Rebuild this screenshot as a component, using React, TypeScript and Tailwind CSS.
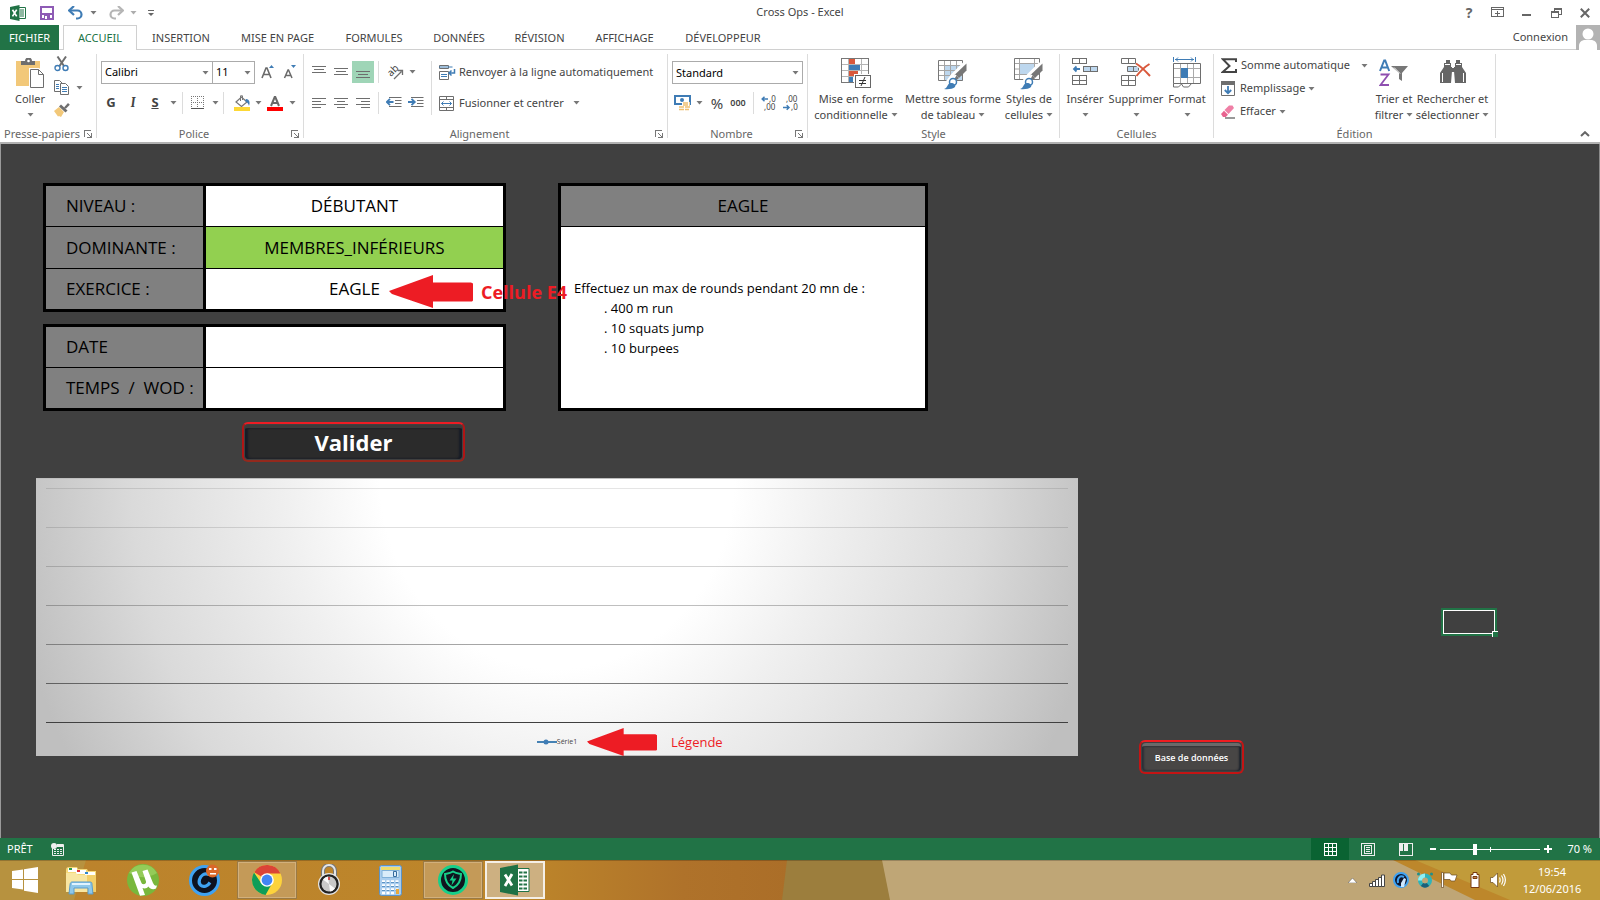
import { useState } from "react";
import type { ReactNode } from "react";

interface IconProps {
    w: number;
    h: number;
    crisp?: boolean;
    className?: string;
    children: ReactNode;
}
interface TaskItem {
    name: string;
    icon: ReactNode;
    state?: "open" | "active";
}

const Icon = ({ w, h, crisp, className, children }: IconProps) => (
    <svg width={w} height={h} viewBox={`0 0 ${w} ${h}`} fill="none" shapeRendering={crisp ? "crispEdges" : undefined} className={className ?? "shrink-0"} aria-hidden="true">
        {children}
    </svg>
)
const Caret = ({ className }: { className?: string }) => (
    <Icon w={7} h={4} className={className ?? "shrink-0 inline-block"}><path d="M0.5 0h6L3.5 3.5z" fill="#777" /></Icon>
)

// quick access toolbar
const ExcelSmall = () => (
    <Icon w={16} h={16}>
        <path d="M9 2.5h6.5v11H9" fill="#fff" stroke="#217346" />
        <path d="M10 5h4M10 7h4M10 9h4M10 11h4" stroke="#217346" strokeWidth="1" />
        <path d="M0 2l9.5-2v16L0 14z" fill="#217346" />
        <path d="M2.5 4.8l4.2 6.6M6.7 4.6l-4.2 6.8" stroke="#fff" strokeWidth="1.7" />
    </Icon>
)
const Save = () => (
    <Icon w={14} h={14} crisp>
        <path d="M1 1h12v12H1z" stroke="#8e5bb5" strokeWidth="2" />
        <path d="M2 7h10v2H2zM4 9h6v4H4z" fill="#8e5bb5" />
        <path d="M5 10h2v3H5z" fill="#fff" />
    </Icon>
)
const Undo = ({ color, flip }: { color: string; flip?: boolean }) => (
    <Icon w={15} h={14} className={flip ? "shrink-0 -scale-x-100" : "shrink-0"}>
        <path d="M2 4.5h7.5a4 4 0 0 1 0 8H8" stroke={color} strokeWidth="2.2" />
        <path d="M6 0L1.2 4.5 6 9" stroke={color} strokeWidth="2.2" />
    </Icon>
)

// clipboard group
const Paste = () => (
    <Icon w={28} h={32}>
        <path d="M0 3h24v25H0z" fill="#f2c879" />
        <path d="M5 7V3h4a3.5 3.5 0 0 1 7 0h3v4z" fill="#6e6e6e" />
        <circle cx="12.5" cy="3" r="1.3" fill="#fff" />
        <path d="M14.500 11.500h8l5 5v13h-13z" fill="#fff" stroke="#fff" strokeWidth="3" />
        <path d="M14.500 11.500h8l5 5v13h-13z" fill="#fff" stroke="#6e6e6e" />
        <path d="M22.500 11.500v5h5" stroke="#6e6e6e" />
    </Icon>
)
const Cut = () => (
    <Icon w={16} h={16}>
        <path d="M3.500 0.500l6.500 9.500M12 0.500L5.500 10" stroke="#6e6e6e" strokeWidth="2" />
        <circle cx="3.500" cy="12" r="2.500" stroke="#3f7cb5" strokeWidth="1.400" />
        <circle cx="11.500" cy="12" r="2.500" stroke="#3f7cb5" strokeWidth="1.400" />
    </Icon>
)
const Copy = () => (
    <Icon w={16} h={15}>
        <path d="M0.500 0.500h5l3 3v8h-8z" fill="#fff" stroke="#6e6e6e" />
        <path d="M2 4.500h3M2 6.500h3M2 8.500h3" stroke="#3f7cb5" />
        <path d="M6.500 3.500h5l3 3v8h-8z" fill="#fff" stroke="#6e6e6e" />
        <path d="M8 7.500h5M8 9.500h5M8 11.500h5" stroke="#3f7cb5" />
    </Icon>
)
const Brush = () => (
    <Icon w={16} h={14}>
        <path d="M0 8l5-4 5 5-3 5-2-1-1 .5z" fill="#f2c879" />
        <path d="M5 3.500l2-2 6.500 6-2 2z" fill="#6e6e6e" />
        <path d="M10 4.500l4-4.500 1.800 1.800-4 4z" fill="#6e6e6e" />
    </Icon>
)
const GrowFont = () => (
    <Icon w={14} h={14}>
        <path d="M1 13L5 3h1l4 10M2.500 9.500h6" stroke="#6a6a6a" strokeWidth="1.600" />
        <path d="M8 3h5l-2.500-3z" fill="#3f7cb5" />
    </Icon>
)
const ShrinkFont = () => (
    <Icon w={14} h={14}>
        <path d="M1.500 13L5 5h.5L9 13M3 10.500h5" stroke="#6a6a6a" strokeWidth="1.500" />
        <path d="M8 0h5l-2.500 3z" fill="#3f7cb5" />
    </Icon>
)
const Borders = () => (
    <Icon w={14} h={14} crisp>
        <path d="M0 .5h13M0 6.500h13M.5 0v13M6.500 0v13M12.500 0v13" stroke="#777" strokeDasharray="1 1" />
        <path d="M0 12.500h13" stroke="#555" />
    </Icon>
)
const Bucket = () => (
    <Icon w={17} h={16}>
        <path d="M2 7l5.500-5 5.500 5-5.500 4.500z" fill="#fff" stroke="#777" strokeWidth="1.200" />
        <path d="M6.500 6V0.800h2V5" stroke="#777" />
        <path d="M12 4c3 0 4.500 3 3 7-.5-2-1.500-4-4-5z" fill="#3f7cb5" />
        <path d="M0 12h16v4H0z" fill="#fdd835" />
    </Icon>
)
const FontColor = () => (
    <Icon w={16} h={16}>
        <path d="M4 11L7.700 2h.6L12 11M5.500 8h5.500" stroke="#6a6a6a" strokeWidth="2" />
        <path d="M0 12h16v4H0z" fill="#f00" />
    </Icon>
)

// horizontal strokes given as [x, y, width]
const Lines = ({ rows, w = 14, h = 12 }: { rows: number[][]; w?: number; h?: number }) => (
    <Icon w={w} h={h} crisp>
        {rows.map(([x, y, len]) => <path key={y} d={`M${x} ${y}h${len}v1h-${len}z`} fill="#6e6e6e" />)}
    </Icon>
)
const Orientation = () => (
    <Icon w={20} h={20}>
        <text x="7" y="15" transform="rotate(-45 7 15)" fontSize="10" fill="#444" fontFamily="Noto Sans, sans-serif">ab</text>
        <path d="M10 17L17.500 9.500M14 8.500h4.500V13" stroke="#6e6e6e" strokeWidth="1.300" />
    </Icon>
)
const Indent = ({ right }: { right?: boolean }) => (
    <Icon w={16} h={12}>
        <path d="M3 .5h12.500M9 3.500h6.500M9 6.500h6.500M3 9.500h12.500" stroke="#6e6e6e" />
        {right
            ? <path d="M0 5h6M3.500 1.800L6.800 5 3.500 8.200" stroke="#3f7cb5" strokeWidth="1.800" />
            : <path d="M1 5h6.500M4 1.800L.8 5 4 8.200" stroke="#3f7cb5" strokeWidth="1.800" />}
    </Icon>
)
const WrapText = () => (
    <Icon w={17} h={15}>
        <path d="M.5 .5h9v3h-9z" stroke="#6e6e6e" />
        <path d="M.5 6.500h9v8h-9z" stroke="#6e6e6e" />
        <path d="M2 9.500h6M2 11.500h6M0 2h13.500" stroke="#3f7cb5" />
        <path d="M15.500 4v4h-5M12.500 5.500L10 8l2.500 2.500" stroke="#3f7cb5" strokeWidth="1.500" />
    </Icon>
)
const Merge = () => (
    <Icon w={15} h={15}>
        <path d="M.5 .5h14v14H.5zM.5 3.500h14M.5 11.500h14M7.500 .5v3M7.500 11.500v3" stroke="#6e6e6e" />
        <path d="M2.500 7.500h10M4.500 5.500l-2 2 2 2M10.500 5.500l2 2-2 2" stroke="#3f7cb5" />
    </Icon>
)
const Currency = () => (
    <Icon w={17} h={16}>
        <path d="M1 1h15v8H1z" fill="#fff" stroke="#3f7cb5" strokeWidth="2" />
        <circle cx="8" cy="5" r="2" fill="#3f7cb5" />
        <path d="M8 7h8v9H8z" fill="#fff" />
        <path d="M9 8h7M9 10h7M5 12h11M5 14.500h10" stroke="#f0c070" strokeWidth="1.600" strokeDasharray="5 1" />
    </Icon>
)
const Decimals = ({ add }: { add?: boolean }) => (
    <Icon w={18} h={22}>
        <g fontSize="8" fill="#444" fontFamily="Noto Sans, sans-serif">
            <text x={add ? 8 : 3} y="10">{add ? ",0" : ",00"}</text>
            <text x={add ? 3 : 8} y="18">{add ? ",00" : ",0"}</text>
        </g>
        {add
            ? <path d="M1 7h6M3.500 4.800L1.200 7l2.300 2.200" stroke="#3f7cb5" strokeWidth="1.500" />
            : <path d="M0 15.500h6M3.700 13.200L6 15.500l-2.300 2.200" stroke="#3f7cb5" strokeWidth="1.500" />}
    </Icon>
)

// style group
const Conditional = () => (
    <Icon w={30} h={32} crisp>
        <path d="M.5 .5h27v24H.5z" fill="#fff" />
        <path d="M8 1h6v5H8zM8 13h9v5H8z" fill="#d9583b" />
        <path d="M8 7h11v5H8zM8 19h4v5H8z" fill="#3f7cb5" />
        <path d="M7.500 0v24M20.500 0v24M0 6.500h27M0 12.500h27M0 18.500h27" stroke="#b5b5b5" />
        <path d="M.5 .5h27v24H.5z" stroke="#777" />
        <path d="M13 16h17v15H13z" fill="#fff" />
        <path d="M14.500 17.500h15v12h-15z" fill="#fff" stroke="#666" />
        <path d="M18 22h7v1h-7zM18 25h7v1h-7z" fill="#333" />
        <path d="M24 19l-4 9" stroke="#333" shapeRendering="auto" />
    </Icon>
)
const PaintBrush = () => (
    <>
        <path d="M28.500 5.500v7l-8 8-4-3.500z" fill="#777" />
        <path d="M17 17l3.500 3.500" stroke="#fff" strokeWidth="1.500" />
        <path d="M18.500 17.500l2.500 2.500-3 2.500-1.500-1.500z" fill="#777" />
        <circle cx="15" cy="24" r="3.500" fill="#fff" stroke="#3f7cb5" strokeWidth="1.500" />
        <path d="M6 31c4-1 3-6 7-6 3 0 5 2 4 4-2 2-7 2.500-11 2z" fill="#3f7cb5" />
    </>
)
const TableFormat = () => (
    <Icon w={30} h={32}>
        <path d="M.5 2.500h24v20H.5z" fill="#fff" />
        <path d="M7 7h18v16H7z" fill="#bdd7ee" />
        <path d="M6.500 2v20M12.500 2v20M18.500 2v20M0 7.500h25M0 12.500h25M0 17.500h25" stroke="#a5a5a5" />
        <path d="M.5 2.500h24v20H.5z" stroke="#777" />
        <path d="M27 6L15 18l-6 8" stroke="#fff" strokeWidth="5" />
        <PaintBrush />
    </Icon>
)
const CellStyles = () => (
    <Icon w={30} h={32}>
        <path d="M.5 .5h25v21H.5z" fill="#fff" />
        <path d="M6 6h14v10H6z" fill="#bdd7ee" />
        <path d="M5.500 0v21M20.500 0v21M0 5.500h25M0 16.500h25M0 11h5M20 11h5" stroke="#a5a5a5" />
        <path d="M.5 .5h25v21H.5z" stroke="#777" />
        <path d="M27 6L15 18l-6 8" stroke="#fff" strokeWidth="5" />
        <PaintBrush />
    </Icon>
)

// cells group
const InsertCells = () => (
    <Icon w={26} h={32} crisp>
        <path d="M.5 .5h14v5H.5zM7.500 .5v5M.5 17.500h14v9H.5zM7.500 17.500v9M.5 22.500h14" stroke="#6e6e6e" />
        <path d="M11.500 8.500h14v5h-14zM18.500 8.500v5" fill="#bdd7ee" stroke="#6e6e6e" />
        <path d="M2 11h6M4.500 8.500L2 11l2.500 2.500" stroke="#3f7cb5" strokeWidth="1.800" shapeRendering="auto" />
    </Icon>
)
const DeleteCells = () => (
    <Icon w={30} h={32}>
        <path d="M.5 .5h14v5H.5zM7.500 .5v5M.5 17.500h14v10H.5zM7.500 17.500v10M.5 22.500h14" stroke="#6e6e6e" />
        <path d="M6.500 8.500h11v5h-11z" fill="#bdd7ee" stroke="#6e6e6e" />
        <path d="M12.500 8.500v5" stroke="#6e6e6e" />
        <path d="M15 5.500c5 3 9 7 14 12.500M28.500 6c-5 3-9 7-13 12" stroke="#fff" strokeWidth="4" />
        <path d="M15 5.500c5 3 9 7 14 12.500M28.500 6c-5 3-9 7-13 12" stroke="#d9583b" strokeWidth="2" />
    </Icon>
)
const FormatCells = () => (
    <Icon w={28} h={32} className="shrink-0 -mt-px">
        <path d="M.5 0v5M22.500 0v5M2 2.500h19M5 .5L3 2.500l2 2M18 .5l2 2-2 2" stroke="#3f7cb5" />
        <path d="M.5 6.500h27v20H.5z" fill="#fff" />
        <path d="M7.500 6v20M14.500 6v20M20.500 6v20M0 11.500h27M0 20.500h27" stroke="#aaa" />
        <path d="M.5 6.500h27v20H.5z" stroke="#6e6e6e" />
        <path d="M8 11h7v10H8z" fill="#3f7cb5" />
        <path d="M.5 26.500v3.500h5l3-3 2 3h5l3-3.500" stroke="#6e6e6e" />
    </Icon>
)

// editing group
const Sigma = () => (
    <Icon w={16} h={16}><path d="M15 4V1.200H1.800L8.500 8l-6.700 6H15v-3" stroke="#444" strokeWidth="2" /></Icon>
)
const Fill = () => (
    <Icon w={14} h={15}>
        <path d="M.5 .5h13v14H.5z" fill="#fff" stroke="#6e6e6e" />
        <path d="M0 0h14v4H0z" fill="#6e6e6e" />
        <path d="M7 5v7M3.800 9L7 12.200 10.200 9" stroke="#3f7cb5" strokeWidth="1.800" />
    </Icon>
)
const Eraser = () => (
    <Icon w={14} h={14}>
        <path d="M3.500 5L8 .5h3.500L13 3 7.500 9z" fill="#ef7fa5" />
        <path d="M3 5.700L7 9.800 4.800 12H2L0 9z" fill="#e8638f" />
        <path d="M4 13h10" stroke="#777" strokeWidth="1.500" />
    </Icon>
)
const SortFilter = () => (
    <Icon w={30} h={32}>
        <path d="M1 13L5.200 2.500h1L10.200 13M2.500 9.500h6" stroke="#3f7cb5" strokeWidth="2" />
        <path d="M1.500 16.500h8l-8 10.500h8.500" stroke="#8e4fb0" strokeWidth="1.800" />
        <path d="M12 8h17l-6 7v8l-3-2v-6z" fill="#777" />
        <path d="M15 9.500l6 6" stroke="#fff" />
    </Icon>
)
const Binoculars = () => (
    <Icon w={26} h={32}>
        <path d="M6 2h4v3h1v4h1v4l-1 12H0V15l4-6V5h2zM20 2h-4v3h-1v4h-1v4l1 12h11V15l-4-6V5h-2z" fill="#666" />
        <path d="M10 10h6v4h-6z" fill="#666" />
        <path d="M2.500 15v9M23.500 15v9M5 6.500h5M16 6.500h5" stroke="#fff" />
    </Icon>
)

const ToolButton = ({ label, className, children }: { label: string; className: string; children: ReactNode }) => (
    <button aria-label={label} className={`flex h-full shrink-0 items-center justify-center ${className}`}>{children}</button>
)
const Sep = ({ className }: { className?: string }) => <div className={`w-px shrink-0 bg-[#dcdcdc] ${className ?? "h-full"}`} />

const BigButton = ({ icon, lines, className }: { icon: ReactNode; lines: string[]; className: string }) => (
    <button className={`flex shrink-0 flex-col items-center pt-1 leading-4 whitespace-nowrap ${className}`}>
        <span className="mb-px flex h-8 items-start">{icon}</span>
        <span>{lines[0]}</span>
        <span className="flex h-4 items-center gap-[3px]">{lines[1]}<Caret /></span>
    </button>
)
const Group = ({ title, launcher, className, children }: { title: string; launcher?: boolean; className: string; children: ReactNode }) => (
    <section className={`flex h-[84px] shrink-0 flex-col border-r border-[#dcdcdc] ${className}`}>
        <div className="h-[74px]">{children}</div>
        <div className="flex h-[10px] items-center leading-3 text-[#666]">
            <span className="flex-1 pt-0.5 text-center whitespace-nowrap">{title}</span>
            {launcher && (
                <button aria-label={`Options ${title}`} className="mt-px mr-1">
                    <Icon w={8} h={8} crisp><path d="M.5 7V.5H7" stroke="#777" /><path d="M3 3l4 4M7.500 3v5M3 7.500h5" stroke="#777" /></Icon>
                </button>
            )}
        </div>
    </section>
)

const tabs: [string, string][] = [
    ["INSERTION", "w-[88px]"],
    ["MISE EN PAGE", "w-[105px]"],
    ["FORMULES", "w-[88px]"],
    ["DONNÉES", "w-[82px]"],
    ["RÉVISION", "w-[79px]"],
    ["AFFICHAGE", "w-[91px]"],
    ["DÉVELOPPEUR", "w-[106px]"],
]

const TitleBar = () => (
    <header className="grid h-[25px] grid-cols-[1fr_auto_1fr] items-center bg-white">
        <div className="flex h-full items-center pl-[10px]">
            <ExcelSmall />
            <button aria-label="Enregistrer" className="ml-[14px]"><Save /></button>
            <button aria-label="Annuler" className="ml-[14px] flex items-center gap-[7px]"><Undo color="#3f7cb5" /><Caret /></button>
            <button aria-label="Rétablir" className="ml-[12px] flex items-center gap-[6px]"><Undo color="#b5b5b5" flip /><Caret className="opacity-60" /></button>
            <button aria-label="Personnaliser" className="ml-[11px]"><Icon w={6} h={6}><path d="M0 .5h6" stroke="#666" /><path d="M0 3h6L3 6z" fill="#666" /></Icon></button>
        </div>
        <h1 className="text-[11px]">Cross Ops - Excel</h1>
        <div className="flex items-center justify-end pr-[10px] text-[#666]">
            <button aria-label="Aide" className="w-[14px] text-sm leading-none font-bold">?</button>
            <button aria-label="Affichage du ruban" className="ml-[15px]"><Icon w={14} h={11} crisp><path d="M.5 .5h12v9H.5zM.5 2.500h12" stroke="#666" /><path d="M6.500 4v5M4 6.500h5" stroke="#666" /></Icon></button>
            <button aria-label="Réduire" className="ml-[17px]"><Icon w={10} h={10} crisp><path d="M0 6h9v2H0z" fill="#666" /></Icon></button>
            <button aria-label="Restaurer" className="ml-[19px]"><Icon w={11} h={10} crisp><path d="M3.500 3V.5h7v6H8M3 1.500h7" stroke="#666" /><path d="M.5 3.500h7v6h-7zM0 4.500h7" stroke="#666" /></Icon></button>
            <button aria-label="Fermer" className="ml-[18px]"><Icon w={10} h={10}><path d="M.8 .8l8.400 8.400M9.200 .8L.8 9.200" stroke="#666" strokeWidth="2" /></Icon></button>
        </div>
    </header>
)

const TabRow = () => (
    <nav className="flex h-[25px] bg-white text-[11px] whitespace-nowrap">
        <button className="w-[59px] shrink-0 bg-[#217346] pt-px text-white">FICHIER</button>
        <div className="w-1 shrink-0 border-b border-[#d0d0d0]" />
        <button className="w-[74px] shrink-0 border border-b-0 border-[#d0d0d0] text-[#217346]">ACCUEIL</button>
        {tabs.map(([name, width]) => (
            <button key={name} className={`shrink-0 border-b border-[#d0d0d0] pt-0.5 ${width}`}>{name}</button>
        ))}
        <div className="flex flex-1 items-center justify-end border-b border-[#d0d0d0]">
            <button className="mr-2">Connexion</button>
        </div>
        <div className="bg-[#b3b3b3]">
            <Icon w={24} h={25}>
                <circle cx="12" cy="9" r="5.500" fill="#fff" />
                <path d="M3 25v-4c0-4 3-6 6-6h6c3 0 6 2 6 6v4z" fill="#fff" />
            </Icon>
        </div>
    </nav>
)

const selectClass = "h-[23px] appearance-none border border-[#ababab] bg-white pt-px pl-[3px] text-[11px] text-black outline-none"
const Combo = ({ label, options, className }: { label: string; options: string[]; className: string }) => (
    <div className={`relative h-[23px] shrink-0 ${className}`}>
        <select aria-label={label} className={`w-full ${selectClass}`}>
            {options.map(o => <option key={o}>{o}</option>)}
        </select>
        <Caret className="pointer-events-none absolute top-[10px] right-1" />
    </div>
)

const Ribbon = () => (
    <div className="flex border-b-2 border-[#b2b2b2] bg-white py-1 text-[11px]">
        <Group title="Presse-papiers" launcher className="w-[97px]">
            <div className="flex">
                <BigButton icon={<Paste />} lines={["Coller", ""]} className="w-11 ml-2" />
                <div className="ml-[2px] flex flex-col items-start gap-2 pt-[2px]">
                    <button aria-label="Couper"><Cut /></button>
                    <button aria-label="Copier" className="flex items-center gap-[6px]"><Copy /><Caret /></button>
                    <button aria-label="Reproduire la mise en forme"><Brush /></button>
                </div>
            </div>
        </Group>
        <Group title="Police" launcher className="w-[207px]">
            <div className="flex flex-col gap-[9px] pt-[7px]">
                <div className="flex h-[22px] items-center pl-1">
                    <Combo label="Police" options={["Calibri", "Arial"]} className="w-[112px]" />
                    <Combo label="Taille" options={["11", "12", "14"]} className="w-[43px] -ml-px" />
                    <ToolButton label="Agrandir" className="ml-[2px] w-[22px]"><GrowFont /></ToolButton>
                    <ToolButton label="Réduire" className="w-[22px]"><ShrinkFont /></ToolButton>
                </div>
                <div className="flex h-[22px] items-center pl-[3px] text-[13px] font-bold">
                    <ToolButton label="Gras" className="w-[22px]">G</ToolButton>
                    <ToolButton label="Italique" className="w-[22px] font-serif italic">I</ToolButton>
                    <ToolButton label="Souligné" className="w-[22px] underline">S</ToolButton>
                    <ToolButton label="Options" className="w-[14px]"><Caret /></ToolButton>
                    <Sep className="ml-[2px] h-[22px]" />
                    <ToolButton label="Bordures" className="ml-[4px] w-[22px]"><Borders /></ToolButton>
                    <ToolButton label="Options" className="w-[12px]"><Caret /></ToolButton>
                    <Sep className="ml-[2px] h-[22px]" />
                    <ToolButton label="Remplissage" className="ml-[7px] w-[22px]"><Bucket /></ToolButton>
                    <ToolButton label="Options" className="w-[10px]"><Caret /></ToolButton>
                    <ToolButton label="Couleur" className="w-[24px]"><FontColor /></ToolButton>
                    <ToolButton label="Options" className="w-[10px]"><Caret /></ToolButton>
                </div>
            </div>
        </Group>
        <Group title="Alignement" launcher className="w-[364px]">
            <div className="flex h-full pt-[7px]">
                <div className="flex flex-col gap-[9px] pl-1">
                    <div className="flex h-[22px] items-center">
                        <ToolButton label="Haut" className="w-[22px]"><Lines rows={[[0, 0, 14], [2, 3, 10], [0, 6, 14]]} /></ToolButton>
                        <ToolButton label="Milieu" className="w-[22px]"><Lines rows={[[0, 2, 14], [2, 5, 10], [0, 8, 14]]} /></ToolButton>
                        <ToolButton label="Bas" className="w-[22px] bg-[#9fd5b7]"><Lines rows={[[0, 5, 14], [2, 8, 10], [0, 11, 14]]} /></ToolButton>
                        <Sep className="ml-1 h-[22px]" />
                        <ToolButton label="Orientation" className="ml-1 w-[22px]"><Orientation /></ToolButton>
                        <ToolButton label="Options" className="w-[14px]"><Caret /></ToolButton>
                    </div>
                    <div className="flex h-[22px] items-center">
                        <ToolButton label="Gauche" className="w-[22px]"><Lines rows={[[0, 1, 14], [0, 4, 9], [0, 7, 14], [0, 10, 9]]} /></ToolButton>
                        <ToolButton label="Centre" className="w-[22px]"><Lines rows={[[0, 1, 14], [3, 4, 8], [0, 7, 14], [3, 10, 8]]} /></ToolButton>
                        <ToolButton label="Droite" className="w-[22px]"><Lines rows={[[0, 1, 14], [5, 4, 9], [0, 7, 14], [5, 10, 9]]} /></ToolButton>
                        <Sep className="ml-1 h-[22px]" />
                        <ToolButton label="Diminuer le retrait" className="ml-[4px] w-[22px]"><Indent /></ToolButton>
                        <ToolButton label="Augmenter le retrait" className="w-[22px]"><Indent right /></ToolButton>
                    </div>
                </div>
                <Sep className="ml-1 h-[54px]" />
                <div className="ml-[7px] flex flex-col gap-[9px] whitespace-nowrap">
                    <button className="flex h-[22px] items-center gap-[3px]"><WrapText />Renvoyer à la ligne automatiquement</button>
                    <button className="flex h-[22px] items-center gap-[5px]"><Merge />Fusionner et centrer<Caret className="ml-1" /></button>
                </div>
            </div>
        </Group>
        <Group title="Nombre" launcher className="w-[140px]">
            <div className="flex flex-col gap-2 pt-[7px] pl-1">
                <Combo label="Format de nombre" options={["Standard", "Nombre", "Monétaire"]} className="w-[131px]" />
                <div className="flex h-[22px] items-center">
                    <ToolButton label="Monétaire" className="w-[21px]"><Currency /></ToolButton>
                    <ToolButton label="Options" className="w-[12px]"><Caret /></ToolButton>
                    <ToolButton label="Pourcentage" className="w-[24px] text-[15px]">%</ToolButton>
                    <ToolButton label="Milliers" className="w-[18px] text-[9px] font-semibold">000</ToolButton>
                    <Sep className="ml-[6px] h-[22px]" />
                    <ToolButton label="Ajouter une décimale" className="ml-[5px] w-[22px]"><Decimals add /></ToolButton>
                    <ToolButton label="Réduire les décimales" className="w-[22px]"><Decimals /></ToolButton>
                </div>
            </div>
        </Group>
        <Group title="Style" className="w-[252px]">
            <div className="flex">
                <BigButton icon={<Conditional />} lines={["Mise en forme", "conditionnelle"]} className="w-[96px]" />
                <BigButton icon={<TableFormat />} lines={["Mettre sous forme", "de tableau"]} className="w-[98px]" />
                <BigButton icon={<CellStyles />} lines={["Styles de", "cellules"]} className="w-[54px]" />
            </div>
        </Group>
        <Group title="Cellules" className="w-[154px]">
            <div className="flex">
                <BigButton icon={<InsertCells />} lines={["Insérer", ""]} className="ml-1 w-[42px]" />
                <BigButton icon={<DeleteCells />} lines={["Supprimer", ""]} className="w-[60px]" />
                <BigButton icon={<FormatCells />} lines={["Format", ""]} className="w-[42px]" />
            </div>
        </Group>
        <Group title="Édition" className="w-[282px]">
            <div className="flex whitespace-nowrap">
                <div className="flex w-[154px] flex-col pl-[7px] *:h-[23px]">
                    <button className="flex items-center gap-1"><Sigma />Somme automatique<Caret className="ml-auto" /></button>
                    <button className="flex items-center gap-[5px]"><Fill /><span className="-mr-0.5">Remplissage</span><Caret /></button>
                    <button className="flex items-center gap-[5px]"><Eraser /><span className="-mr-0.5">Effacer</span><Caret /></button>
                </div>
                <BigButton icon={<SortFilter />} lines={["Trier et", "filtrer"]} className="ml-[5px] w-[42px]" />
                <BigButton icon={<Binoculars />} lines={["Rechercher et", "sélectionner"]} className="w-[75px]" />
            </div>
        </Group>
        <button aria-label="Réduire le ruban" className="mr-[10px] mb-px ml-auto self-end"><Icon w={10} h={6}><path d="M1 5l4-3.800L9 5" stroke="#666" strokeWidth="2" /></Icon></button>
    </div>
)

const Arrow = ({ className }: { className: string }) => (
    <svg viewBox="0 0 84 33" preserveAspectRatio="none" className={className} aria-hidden="true">
        <path d="M0 16L44 0v7.500h38l2 1v17l-1 1H44V33L3 19z" fill="#ed1c24" />
    </svg>
)

const labelCell = "w-[160px] border-r-3 border-black bg-[#808080] pl-5 text-left font-normal"

const Sheet = () => {
    const [date, setDate] = useState("");
    const [temps, setTemps] = useState("");
    return (
        <main className="relative flex-1 border-x border-[#9a9a9a] border-r-[#8a8a8a] bg-[#404040] pt-[39px] pl-[35px] font-['Open_Sans',sans-serif] text-black">
            <div className="relative ml-[7px] flex items-start text-[17px] leading-6">
                <div className="flex w-[463px] shrink-0 flex-col gap-3">
                    <table className="w-full border-separate border-spacing-0 border-3 border-black">
                        <tbody>
                            <tr className="h-[41px]">
                                <th className={`${labelCell} border-b`}>NIVEAU :</th>
                                <td className="border-b bg-white text-center">DÉBUTANT</td>
                            </tr>
                            <tr className="h-[42px]">
                                <th className={`${labelCell} border-b`}>DOMINANTE :</th>
                                <td className="border-b bg-[#92d050] text-center">MEMBRES_INFÉRIEURS</td>
                            </tr>
                            <tr className="h-10">
                                <th className={labelCell}>EXERCICE :</th>
                                <td className="bg-white text-center">EAGLE</td>
                            </tr>
                        </tbody>
                    </table>
                    <table className="w-full border-separate border-spacing-0 border-3 border-black">
                        <tbody>
                            <tr className="h-[41px]">
                                <th className={`${labelCell} border-b`}><label htmlFor="date">DATE</label></th>
                                <td className="border-b bg-white"><input id="date" value={date} onChange={e => setDate(e.target.value)} className="w-full text-center outline-none" /></td>
                            </tr>
                            <tr className="h-10">
                                <th className={labelCell}><label htmlFor="temps" className="whitespace-pre">TEMPS  /  WOD :</label></th>
                                <td className="bg-white"><input id="temps" value={temps} onChange={e => setTemps(e.target.value)} className="w-full text-center outline-none" /></td>
                            </tr>
                        </tbody>
                    </table>
                </div>
                <div className="ml-[52px] w-[370px] shrink-0 border-3 border-black bg-white">
                    <h2 className="h-[41px] border-b bg-[#808080] text-center leading-10">EAGLE</h2>
                    <div className="flex h-[181px] flex-col justify-center pl-[13px] text-[13px] leading-5">
                        <p>Effectuez un max de rounds pendant 20 mn de :</p>
                        <ul className="pl-[30px]">
                            <li>. 400 m run</li>
                            <li>. 10 squats jump</li>
                            <li>. 10 burpees</li>
                        </ul>
                    </div>
                </div>
                <Arrow className="absolute top-[92px] left-[346px] h-[33px] w-[84px]" />
                <span className="absolute top-[97px] left-[438px] text-lg leading-6 font-bold whitespace-nowrap text-[#ed1c24]">Cellule E4</span>
            </div>
            <button className="mt-[11px] ml-[206px] block h-10 w-[223px] rounded-md border-2 border-[#b01515] border-t-[#ec1c24] border-b-[#93291d] p-px">
                <span className="block h-full rounded-sm border-t-3 border-[#3b3b3b] bg-[#2b2b2b] text-[22px] leading-7 font-bold text-white shadow-[inset_3px_0_2px_#171c26,inset_-3px_0_2px_#171c26]">Valider</span>
            </button>
            <div className="mt-4 flex items-end">
                <div className="relative h-[278px] w-[1042px] shrink-0 border-y border-[#bfbfbf] bg-[radial-gradient(53%_215%_at_50%_0%,#fff_32%,#f0f0f0_49%,#dadada_77%,#bfbfbf_100%)] px-[10px] pt-[9px]">
                    <div className="flex h-[235px] flex-col justify-between *:h-px">
                        <div className="bg-black/10" />
                        <div className="bg-black/12" />
                        <div className="bg-black/17" />
                        <div className="bg-black/25" />
                        <div className="bg-black/35" />
                        <div className="bg-black/50" />
                        <div className="bg-[#404040]" />
                    </div>
                    <div className="mt-[13px] flex items-center justify-center text-[7px] leading-3 text-[#444]">
                        <Icon w={20} h={6}><path d="M0 3h20" stroke="#4682b4" strokeWidth="2" /><circle cx="9" cy="3" r="2.500" fill="#3f7cb5" /></Icon>
                        Série1
                    </div>
                    <Arrow className="absolute top-[249px] left-[551px] h-7 w-[70px]" />
                    <span className="absolute top-[253px] left-[635px] text-[13px] leading-5 text-[#ed1c24]">Légende</span>
                </div>
                <button className="-mb-[18px] ml-[61px] h-[34px] w-[105px] shrink-0 rounded-md border-2 border-[#c41414] border-t-[#f01c20] p-px">
                    <span className="block h-full rounded-sm border-t-3 border-[#6a6a6a] bg-[#484645] text-[9px] leading-6 font-semibold whitespace-nowrap text-white shadow-[inset_2px_0_2px_#2b3038,inset_-2px_0_2px_#1c222c]">Base de données</span>
                </button>
            </div>
            {/* selected cell with its fill handle */}
            <div className="absolute top-[464px] right-[102px] h-7 w-14 border-2 border-[#217346]">
                <div className="h-full border border-white" />
                <div className="absolute -right-[3px] -bottom-[3px] h-[6px] w-[6px] border-t border-l border-white bg-[#217346]" />
            </div>
        </main>
    )
}

const StatusBar = () => (
    <footer className="flex h-[22px] items-center bg-[#217346] text-[11px] text-white">
        <span className="ml-[7px]">PRÊT</span>
        <button aria-label="Enregistrer une macro" className="ml-[18px]">
            <Icon w={13} h={13}>
                <path d="M1.500 4v8.500h11v-11H6" stroke="#eee" />
                <path d="M6 2h6v2H6z" fill="#eee" />
                <path d="M3 6.500h8M3 8.500h8M3 10.500h8" stroke="#eee" strokeDasharray="2 1" />
                <circle cx="3" cy="3" r="3" fill="#eee" />
            </Icon>
        </button>
        <div className="ml-auto flex h-full items-center">
            <button aria-label="Normal" className="flex h-full w-[38px] items-center justify-center bg-[#0a6332]">
                <Icon w={13} h={13} crisp><path d="M.5 .5h12v12H.5zM4.500 0v13M8.500 0v13M0 4.500h13M0 8.500h13" stroke="#fff" /></Icon>
            </button>
            <button aria-label="Mise en page" className="flex h-full w-[38px] items-center justify-center">
                <Icon w={14} h={13} crisp><path d="M.5 .5h13v12H.5zM3.500 2.500h7v8h-7zM5 4.500h4M5 6.500h4M5 8.500h4" stroke="#eee" /></Icon>
            </button>
            <button aria-label="Avec sauts de page" className="flex h-full w-[38px] items-center justify-center">
                <Icon w={14} h={13} crisp><path d="M.5 .5h13v12H.5z" stroke="#eee" /><path d="M0 0h4v8H0zM5 0h4v8H5z" fill="#eee" /></Icon>
            </button>
            <button aria-label="Zoom arrière" className="ml-[5px]"><Icon w={6} h={8} crisp><path d="M0 3h6v2H0z" fill="#fff" /></Icon></button>
            <input
                type="range"
                aria-label="Zoom"
                min={0}
                max={100}
                defaultValue={34}
                className="ml-1 h-[11px] w-[100px] appearance-none bg-[linear-gradient(#fff,#fff),linear-gradient(#fff,#fff)] bg-[length:100%_1px,1px_5px] bg-center bg-no-repeat [&::-webkit-slider-thumb]:h-[11px] [&::-webkit-slider-thumb]:w-1 [&::-webkit-slider-thumb]:appearance-none [&::-webkit-slider-thumb]:bg-white"
            />
            <button aria-label="Zoom avant" className="ml-1"><Icon w={8} h={8} crisp><path d="M0 3h8v2H0zM3 0h2v8H3z" fill="#fff" /></Icon></button>
            <span className="mr-2 ml-[15px]">70 %</span>
        </div>
    </footer>
)

const taskItems: TaskItem[] = [
    {
        name: "Explorateur",
        icon: (
            <Icon w={32} h={32}>
                <path d="M1 6c0-2 1-3 3-3h8l1 2h9l1 2h8v21H1z" fill="#f5d97a" />
                <path d="M3 4h9v4H3zM11 6h10v4H11zM20 8h10v4H20z" fill="#fff" />
                <path d="M4 4h3v2H4z" fill="#2a9a4a" /><path d="M12 6h3v2h-3z" fill="#d33" /><path d="M20 8h3v2h-3z" fill="#38c" />
                <path d="M1 9h10l2 2h18v17H1z" fill="#f8e6a2" />
                <path d="M22 11h9v17h-9z" fill="#f3cf6a" />
                <path d="M5 21c0-2 1-3 2-3h18c2 0 2 1 2 3l1 9h-5v-6H9v6H4z" fill="#8fc8ea" stroke="#5a9ccc" />
                <path d="M7 20h18" stroke="#e0f3ff" strokeWidth="2" />
            </Icon>
        ),
    },
    {
        name: "µTorrent",
        icon: (
            <Icon w={34} h={34}>
                <circle cx="17" cy="17" r="16" fill="#78b73c" />
                <path d="M3 10a16 16 0 0 1 28 0c-8 5-18 6-28 0z" fill="#94cb58" />
                <path d="M5.500 9.500l5-1.500 5 12c1 2 5 1.500 4.500-1.500L16.500 8l5-1.500L27 20c1 2 2 3 4 2.500l-1 3c-3 1.500-6 .5-7.500-2-1.500 2-4 2.500-6 1.500l2.500 7-5 .8z" fill="#fff" />
            </Icon>
        ),
    },
    {
        name: "C Launcher",
        icon: (
            <Icon w={34} h={34}>
                <circle cx="16.500" cy="17.500" r="14" fill="#0d1220" stroke="#3fa2f2" strokeWidth="3" />
                <path d="M21 11.500c-5-2-8 1-9.500 5-1.500 5 2 8 6.500 6.500 1.500-.5 3-2 4-3.500" stroke="#3fa2f2" strokeWidth="3.200" />
                <circle cx="24.500" cy="8" r="6.500" fill="#d9682a" />
                <path d="M21 6h2.500M26 6h2.500" stroke="#fff" strokeWidth="2" />
                <path d="M22 10h6v1.500h-6z" fill="#fff" />
            </Icon>
        ),
    },
    {
        name: "Chrome",
        state: "open",
        icon: (
            <Icon w={32} h={32}>
                <circle cx="16" cy="16" r="15" fill="#fdd33c" />
                <path d="M16 16L3.200 8.200A15 15 0 0 1 29.500 9.500H16z" fill="#db4437" />
                <path d="M3 8.500A15 15 0 0 0 14.500 30.900l6.800-11.800L16 16l-6 3z" fill="#0f9d58" />
                <circle cx="16" cy="16" r="6.800" fill="#fff" />
                <circle cx="16" cy="16" r="5.400" fill="#4285f4" />
            </Icon>
        ),
    },
    {
        name: "Cadenas",
        icon: (
            <Icon w={24} h={32}>
                <path d="M6 13V7a6 6 0 0 1 12 0v6" stroke="#777" strokeWidth="4" />
                <path d="M6 13V7a6 6 0 0 1 12 0v6" stroke="#e5e5e5" strokeWidth="2" />
                <circle cx="12" cy="20" r="11" fill="#e5e5e5" />
                <circle cx="12" cy="20" r="9.800" fill="#222" />
                <circle cx="12" cy="20" r="7.500" fill="#c9c9c9" />
                <path d="M12 20l-6-4.500a7.500 7.500 0 0 1 5-3zM12 20l6 4.500a7.500 7.500 0 0 1-5 3z" fill="#fafafa" />
                <path d="M12 13v3" stroke="#c22" strokeWidth="1.500" />
            </Icon>
        ),
    },
    {
        name: "Calculatrice",
        icon: (
            <Icon w={24} h={32}>
                <rect x=".5" y="1.500" width="22" height="30" rx="2" fill="#a9cdee" stroke="#5c93c5" />
                <path d="M2 3h19v3H2z" fill="#f0dc6a" />
                <path d="M3 6.500h17v7H3z" fill="#d9ecfa" stroke="#7fb0d8" />
                <path d="M14.500 7.500h3v5h-3z" stroke="#356b9c" />
                <path d="M3 17.500h17M3 21.500h17M3 25.500h17M3 29h13" stroke="#fff" strokeWidth="2.500" strokeDasharray="3 1.500" />
                <path d="M3 18.500h17M3 22.500h17M3 26.500h17" stroke="#5c93c5" strokeDasharray="3 1.500" />
                <path d="M17 25h3v5h-3z" fill="#e9a83a" />
            </Icon>
        ),
    },
    {
        name: "Protection",
        state: "open",
        icon: (
            <Icon w={32} h={32}>
                <circle cx="16" cy="16" r="13.500" fill="#10151f" stroke="#17cf8a" strokeWidth="3" />
                <path d="M16 7.500c3 2 5 2 8 2.500 0 7-2 11-8 14-6-3-8-7-8-14 3-.5 5-.5 8-2.500z" stroke="#17cf8a" strokeWidth="2" />
                <path d="M17 10l-4.500 6.500h3l-1 5 5-7h-3.500z" fill="#17cf8a" />
            </Icon>
        ),
    },
    {
        name: "Excel",
        state: "active",
        icon: (
            <Icon w={30} h={32}>
                <path d="M16 4.500h13v23H16" fill="#fff" stroke="#217346" />
                <path d="M19 8.500h8M19 12.500h8M19 16.500h8M19 20.500h8M19 24.500h8" stroke="#217346" strokeWidth="2" strokeDasharray="3.500 1" />
                <path d="M0 4l18-3.500v31L0 28z" fill="#1e7145" />
                <path d="M5 10.500l7 11M12 10l-7 12" stroke="#fff" strokeWidth="2.800" />
            </Icon>
        ),
    },
]

const stateClass = {
    open: "border border-[#9a7a45] bg-[#c49a58] shadow-[inset_0_0_0_1px_#d2b07c]",
    active: "border-2 border-white/80 bg-[#cdb081]",
}

const Taskbar = () => (
    <div className="relative flex h-10 items-center text-white">
        <svg viewBox="0 0 1600 40" preserveAspectRatio="none" className="absolute inset-0 h-full w-full" aria-hidden="true">
            <defs>
                <linearGradient id="gold" gradientUnits="userSpaceOnUse" x1="80" y1="0" x2="790" y2="0">
                    <stop offset="0" stopColor="#bc832c" />
                    <stop offset=".62" stopColor="#bd862a" />
                    <stop offset=".85" stopColor="#af722a" />
                    <stop offset="1" stopColor="#ab6e28" />
                </linearGradient>
            </defs>
            <path d="M0 0h1600v40H0z" fill="#bfa676" />
            <path d="M0 0h800v40H0z" fill="url(#gold)" />
            <path d="M0 0h86l-12 40H0z" fill="#b7923f" />
            <path d="M787 0h95l8 40h-108z" fill="#9c7e3d" />
            <path d="M1393 0h207v40h-125z" fill="#bd872b" />
            <path d="M1415 0h185v40h-90z" fill="#c19b3a" />
            <path d="M0 0h1600v1H0z" fill="#000" opacity=".2" />
        </svg>
        <button aria-label="Démarrer" className="relative flex w-[50px] justify-center">
            <Icon w={26} h={26}><path d="M0 4l11-1.500V12H0zM12 2.300L26 0v12H12zM0 13h11v9.500L0 21zM12 13h14v13l-14-2.300z" fill="#fff" /></Icon>
        </button>
        {taskItems.map(item => (
            <button key={item.name} aria-label={item.name} className={`relative mx-px flex h-[38px] w-[60px] items-center justify-center ${item.state ? stateClass[item.state] : ""}`}>
                {item.icon}
            </button>
        ))}
        <div className="relative ml-auto flex h-full items-center">
            <button aria-label="Icônes cachées" className="flex w-[25px] justify-center"><Icon w={9} h={5}><path d="M0 5l4.500-5L9 5z" fill="#fff" stroke="#555" strokeWidth=".5" /></Icon></button>
            <button aria-label="Réseau" className="flex w-6 justify-center">
                <Icon w={17} h={13}>
                    <path d="M.5 9.500h3v3h-3zM3.500 7.500h3v5h-3zM6.500 5.500h3v7h-3zM9.500 3.500h3v9h-3zM12.500 1h3v11.500h-3z" fill="#fff" stroke="#444" />
                </Icon>
            </button>
            <button aria-label="C Launcher" className="flex w-6 justify-center">
                <Icon w={16} h={16}>
                    <circle cx="8" cy="8" r="7" fill="#0d1730" stroke="#3fa2f2" strokeWidth="2" />
                    <path d="M11 5c-4-2-7 1-6 6" stroke="#3fa2f2" strokeWidth="2" />
                    <path d="M8 11l3-5 2 1-2 8H8z" fill="#cfe8ff" />
                </Icon>
            </button>
            <button aria-label="Assistant" className="flex w-6 justify-center">
                <Icon w={16} h={16}>
                    <circle cx="8" cy="8.500" r="5" stroke="#2fb3b8" strokeWidth="4" />
                    <path d="M3 8.500a5 5 0 0 1 5-5" stroke="#8ff0f5" strokeWidth="4" />
                    <path d="M5 12.500a5 5 0 0 0 6 0" stroke="#1b5f78" strokeWidth="4" />
                    <circle cx="1.500" cy="2" r="1.500" fill="#1f8f8a" /><circle cx="14.500" cy="2" r="1.500" fill="#1f8f8a" />
                </Icon>
            </button>
            <button aria-label="Centre de maintenance" className="flex w-6 justify-center">
                <Icon w={17} h={16}>
                    <path d="M.5 .5h2v15h-2z" fill="#fff" stroke="#6b4a20" strokeWidth=".7" />
                    <path d="M3 1h6l1.500 2h5.500l-2 6h-4L9 7.500H3z" fill="#fff" stroke="#6b4a20" strokeWidth=".7" />
                </Icon>
            </button>
            <button aria-label="Batterie" className="flex w-7 justify-center">
                <Icon w={10} h={16}>
                    <path d="M3 .5h4v2h2v13H1v-13h2z" fill="#fff" stroke="#7a3b10" />
                    <path d="M3 4.500h4v2H3z" fill="#c08050" stroke="#7a3b10" />
                </Icon>
            </button>
            <button aria-label="Volume" className="flex w-[18px] justify-center">
                <Icon w={16} h={16}>
                    <path d="M.5 5.500H3L7.500 1v14L3 10.500H.5z" fill="#fff" stroke="#6b4a20" strokeWidth=".7" />
                    <path d="M9.500 5.500c1 2 1 3 0 5M11.500 3.500c2 3 2 6 0 9M13.500 2c2.500 4 2.500 8 0 12" stroke="#fff" strokeWidth="1.200" />
                </Icon>
            </button>
            <time className="mr-[3px] w-[90px] text-center text-[11px] leading-[17px]">19:54<br />12/06/2016</time>
        </div>
    </div>
)

export default function App() {
    return (
        <div className="flex min-h-screen flex-col font-['Noto_Sans',sans-serif] text-[#444]">
            <TitleBar />
            <TabRow />
            <Ribbon />
            <Sheet />
            <StatusBar />
            <Taskbar />
        </div>
    )
}
